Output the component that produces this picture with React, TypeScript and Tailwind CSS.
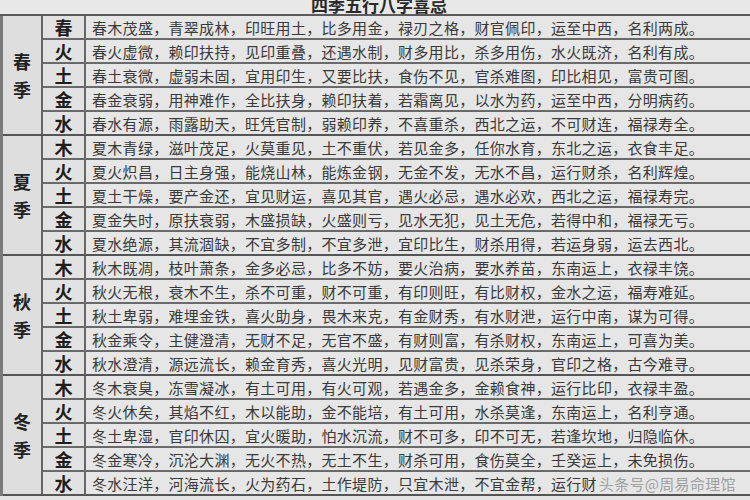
import React from 'react';

interface Season {
  name: [string, string];
  rows: { el: string; text: string }[];
}

const seasons: Season[] = [
  {
    name: ['春', '季'],
    rows: [
      { el: '春', text: '春木茂盛，青翠成林，印旺用土，比多用金，禄刃之格，财官佩印，运至中西，名利两成。' },
      { el: '火', text: '春火虚微，赖印扶持，见印重叠，还遇水制，财多用比，杀多用伤，水火既济，名利有成。' },
      { el: '土', text: '春土衰微，虚弱未固，宜用印生，又要比扶，食伤不见，官杀难图，印比相见，富贵可图。' },
      { el: '金', text: '春金衰弱，用神难作，全比扶身，赖印扶着，若霜离见，以水为药，运至中西，分明病药。' },
      { el: '水', text: '春水有源，雨露助天，旺凭官制，弱赖印养，不喜重杀，西北之运，不可财连，福禄寿全。' },
    ],
  },
  {
    name: ['夏', '季'],
    rows: [
      { el: '木', text: '夏木青绿，滋叶茂足，火莫重见，土不重伏，若见金多，任你水育，东北之运，衣食丰足。' },
      { el: '火', text: '夏火炽昌，日主身强，能烧山林，能炼金钢，无金不发，无水不昌，运行财杀，名利辉煌。' },
      { el: '土', text: '夏土干燥，要产金还，宜见财运，喜见其官，遇火必忌，遇水必欢，西北之运，福禄寿完。' },
      { el: '金', text: '夏金失时，原扶衰弱，木盛损缺，火盛则亏，见水无犯，见土无危，若得中和，福禄无亏。' },
      { el: '水', text: '夏水绝源，其流涸缺，不宜多制，不宜多泄，宜印比生，财杀用得，若运身弱，运去西北。' },
    ],
  },
  {
    name: ['秋', '季'],
    rows: [
      { el: '木', text: '秋木既凋，枝叶萧条，金多必忌，比多不妨，要火治病，要水养苗，东南运上，衣禄丰饶。' },
      { el: '火', text: '秋火无根，衰木不生，杀不可重，财不可重，有印则旺，有比财权，金水之运，福寿难延。' },
      { el: '土', text: '秋土卑弱，难埋金铁，喜火助身，畏木来克，有金财秀，有水财泄，运行中南，谋为可得。' },
      { el: '金', text: '秋金乘令，主健澄清，无财不足，无官不盛，有财则富，有杀财权，东南运上，可喜为美。' },
      { el: '水', text: '秋水澄清，源远流长，赖金育秀，喜火光明，见财富贵，见杀荣身，官印之格，古今难寻。' },
    ],
  },
  {
    name: ['冬', '季'],
    rows: [
      { el: '木', text: '冬木衰臭，冻雪凝冰，有土可用，有火可观，若遇金多，金赖食神，运行比印，衣禄丰盈。' },
      { el: '火', text: '冬火休矣，其焰不红，木以能助，金不能培，有土可用，水杀莫逢，东南运上，名利亨通。' },
      { el: '土', text: '冬土卑湿，官印休囚，宜火暖助，怕水沉流，财不可多，印不可无，若逢坎地，归隐临休。' },
      { el: '金', text: '冬金寒冷，沉沦大渊，无火不热，无土不生，财杀可用，食伤莫全，壬癸运上，未免损伤。' },
      { el: '水', text: '冬水汪洋，河海流长，火为药石，土作堤防，只宜木泄，不宜金帮，运行财' },
    ],
  },
];

const cjk = { fontFamily: '"Noto Sans CJK SC", "Noto Sans", sans-serif' };

export default function App() {
  return (
    <div className="w-[750px] h-[500px] overflow-hidden bg-[#e4e4e4] text-[#333]" style={cjk}>
      {/* Title */}
      <div className="h-[16px] border-b-2 border-[#5a5a5a] bg-[#e8e8e8] flex justify-center items-end overflow-hidden">
        <div className="text-[17px] font-bold leading-none text-[#2a2a2a] pl-[8px] mb-[1px]">四季五行八字喜忌</div>
      </div>

      {/* Table body */}
      <div className="border-l-[3px] border-[#7a7a7a]">
        {seasons.map((s, si) => (
          <div key={si} className="flex border-b-2 border-[#555]">
            {/* Season cell */}
            <div className="w-[40px] shrink-0 bg-[#dedede] border-r-2 border-[#666] flex flex-col items-center justify-center gap-[6px]">
              <span className="text-[18px] font-bold leading-[22px] text-[#222]">{s.name[0]}</span>
              <span className="text-[18px] font-bold leading-[22px] text-[#222]">{s.name[1]}</span>
            </div>
            <div className="flex-1 flex flex-col">
              {s.rows.map((r, ri) => (
                <div
                  key={ri}
                  className={ri < 4 ? 'flex h-[24px] border-b-2 border-[#6a6a6a]' : 'flex h-[22px]'}
                >
                  <div className="w-[43px] shrink-0 bg-[#e2e2e2] border-r-2 border-[#666] flex items-center justify-center text-[18px] font-bold text-[#1e1e1e] leading-none">
                    {r.el}
                  </div>
                  <div className="flex-1 bg-[#e6e6e6] flex items-center pl-[6px] text-[15px] tracking-[0.3px] leading-none whitespace-nowrap text-[#3a3a3a]">
                    {r.text}
                    {si === 3 && ri === 4 && (
                      <span className="ml-[2px] text-[#a0a0a0] text-[15px] tracking-[0.3px]">头条号@周易命理馆</span>
                    )}
                  </div>
                </div>
              ))}
            </div>
          </div>
        ))}
      </div>
    </div>
  );
}
